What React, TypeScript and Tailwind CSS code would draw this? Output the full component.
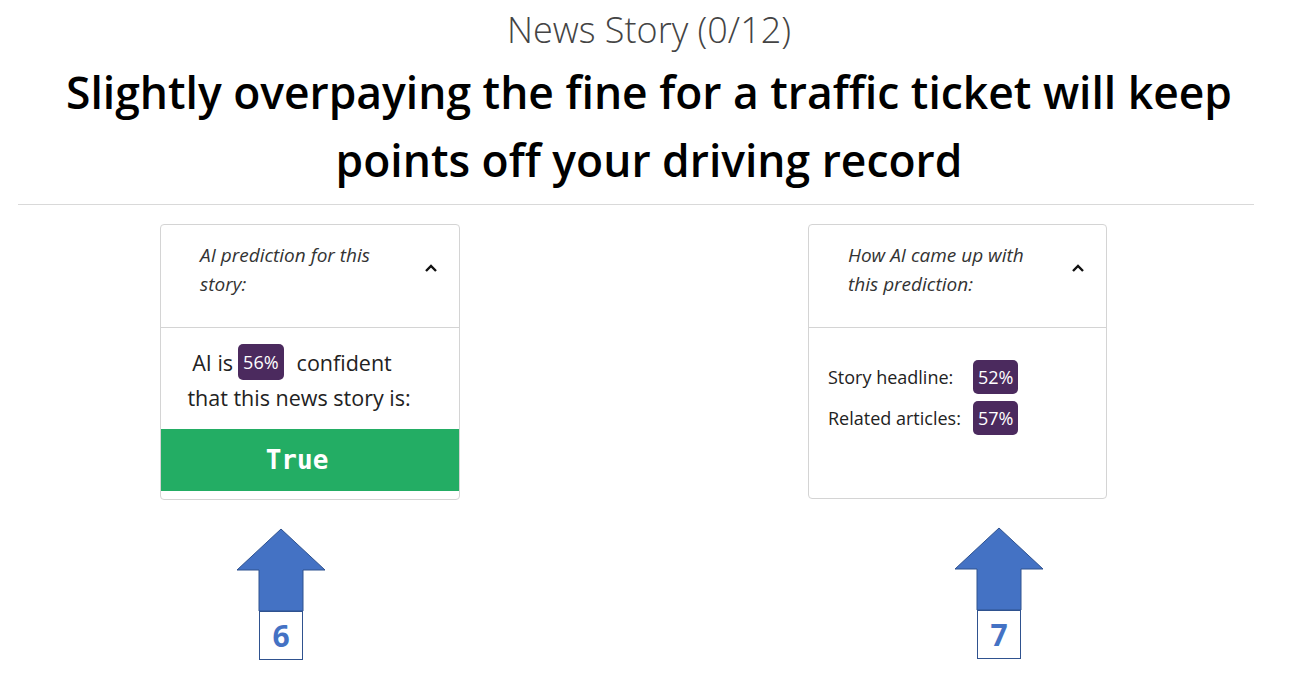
import React from "react";

const sans = "font-['Open_Sans','Noto_Sans',sans-serif]";

const Chevron = () => (
  <svg width="14" height="10" viewBox="0 0 14 10" className="mt-[38px] shrink-0">
    <polyline points="2,8 7,3 12,8" fill="none" stroke="#111" strokeWidth="2.4" />
  </svg>
);

const Badge = ({ value, tall }: { value: string; tall?: boolean }) => (
  <span
    className={`inline-flex items-center rounded-[5px] bg-[#4b2a5e] px-[5px] text-[18px] text-white ${
      tall ? "h-[36px]" : "h-[34px]"
    }`}
  >
    {value}
  </span>
);

const Arrow = ({ n }: { n: string }) => (
  <div className="flex w-[90px] flex-col items-center">
    <svg width="90" height="84" viewBox="0 0 90 84" className="block">
      <polygon points="45,1 89,42 67,42 67,83 23,83 23,42 1,42" fill="#4472c4" stroke="#2f528f" strokeWidth="1" />
    </svg>
    <div className="-mt-px flex h-[49px] w-[44px] items-center justify-center border border-[#2f528f] bg-white font-['Open_Sans',sans-serif] text-[30px] font-bold text-[#4472c4]">
      {n}
    </div>
  </div>
);

export default function App() {
  return (
    <div className={`min-h-screen bg-white ${sans} text-[#212529]`}>
      <div className="flex flex-col items-center pt-[6px]">
        <div className="text-[36px] font-light leading-[48px] text-[#444]">News Story (0/12)</div>
        <h1 className="mt-[4px] w-[1240px] text-center text-[44.4px] font-semibold leading-[68px] text-black">
          Slightly overpaying the fine for a traffic ticket will keep points off your driving record
        </h1>
      </div>
      <div className="mx-[18px] mt-[10px] h-px w-[1236px] bg-[#d9d9d9]" />

      <div className="mt-[19px] flex">
        <div className="ml-[160px] w-[300px]">
          <div className="rounded-[4px] border border-[#d4d4d4] bg-white">
            <div className="flex h-[103px] items-start border-b border-[#d4d4d4] pl-[39px] pr-[21px]">
              <div className="flex-1 pt-[16px] text-[19px] italic leading-[29px] text-[#333]">
                AI prediction for this
                <br />
                story:
              </div>
              <Chevron />
            </div>
            <div className="flex flex-col items-center pr-[22px] pt-[16px] text-[21.5px] leading-[35px] text-[#222]">
              <div className="mr-[14px] flex items-center">
                <span className="mr-[5px]">AI is</span>
                <Badge value="56%" tall />
                <span className="ml-[13px]">confident</span>
              </div>
              <div>that this news story is:</div>
            </div>
            <div className="mt-[14px] mb-[8px] flex h-[62px] items-center justify-center bg-[#23ad64] pr-[26px] font-['DejaVu_Sans_Mono',monospace] text-[26px] font-bold text-white">
              True
            </div>
          </div>
          <div className="mt-[28px] ml-[76px]">
            <Arrow n="6" />
          </div>
        </div>

        <div className="ml-[348px] w-[299px]">
          <div className="h-[275px] rounded-[4px] border border-[#d4d4d4] bg-white">
            <div className="flex h-[103px] items-start border-b border-[#d4d4d4] pl-[39px] pr-[21px]">
              <div className="flex-1 pt-[16px] text-[19px] italic leading-[29px] text-[#333]">
                How AI came up with
                <br />
                this prediction:
              </div>
              <Chevron />
            </div>
            <div className="pl-[19px] pt-[32px] text-[18px] text-[#222]">
              <div className="flex items-center">
                <span className="w-[145px]">Story headline:</span>
                <Badge value="52%" />
              </div>
              <div className="mt-[7px] flex items-center">
                <span className="w-[145px]">Related articles:</span>
                <Badge value="57%" />
              </div>
            </div>
          </div>
          <div className="mt-[28px] ml-[146px]">
            <Arrow n="7" />
          </div>
        </div>
      </div>
    </div>
  );
}
